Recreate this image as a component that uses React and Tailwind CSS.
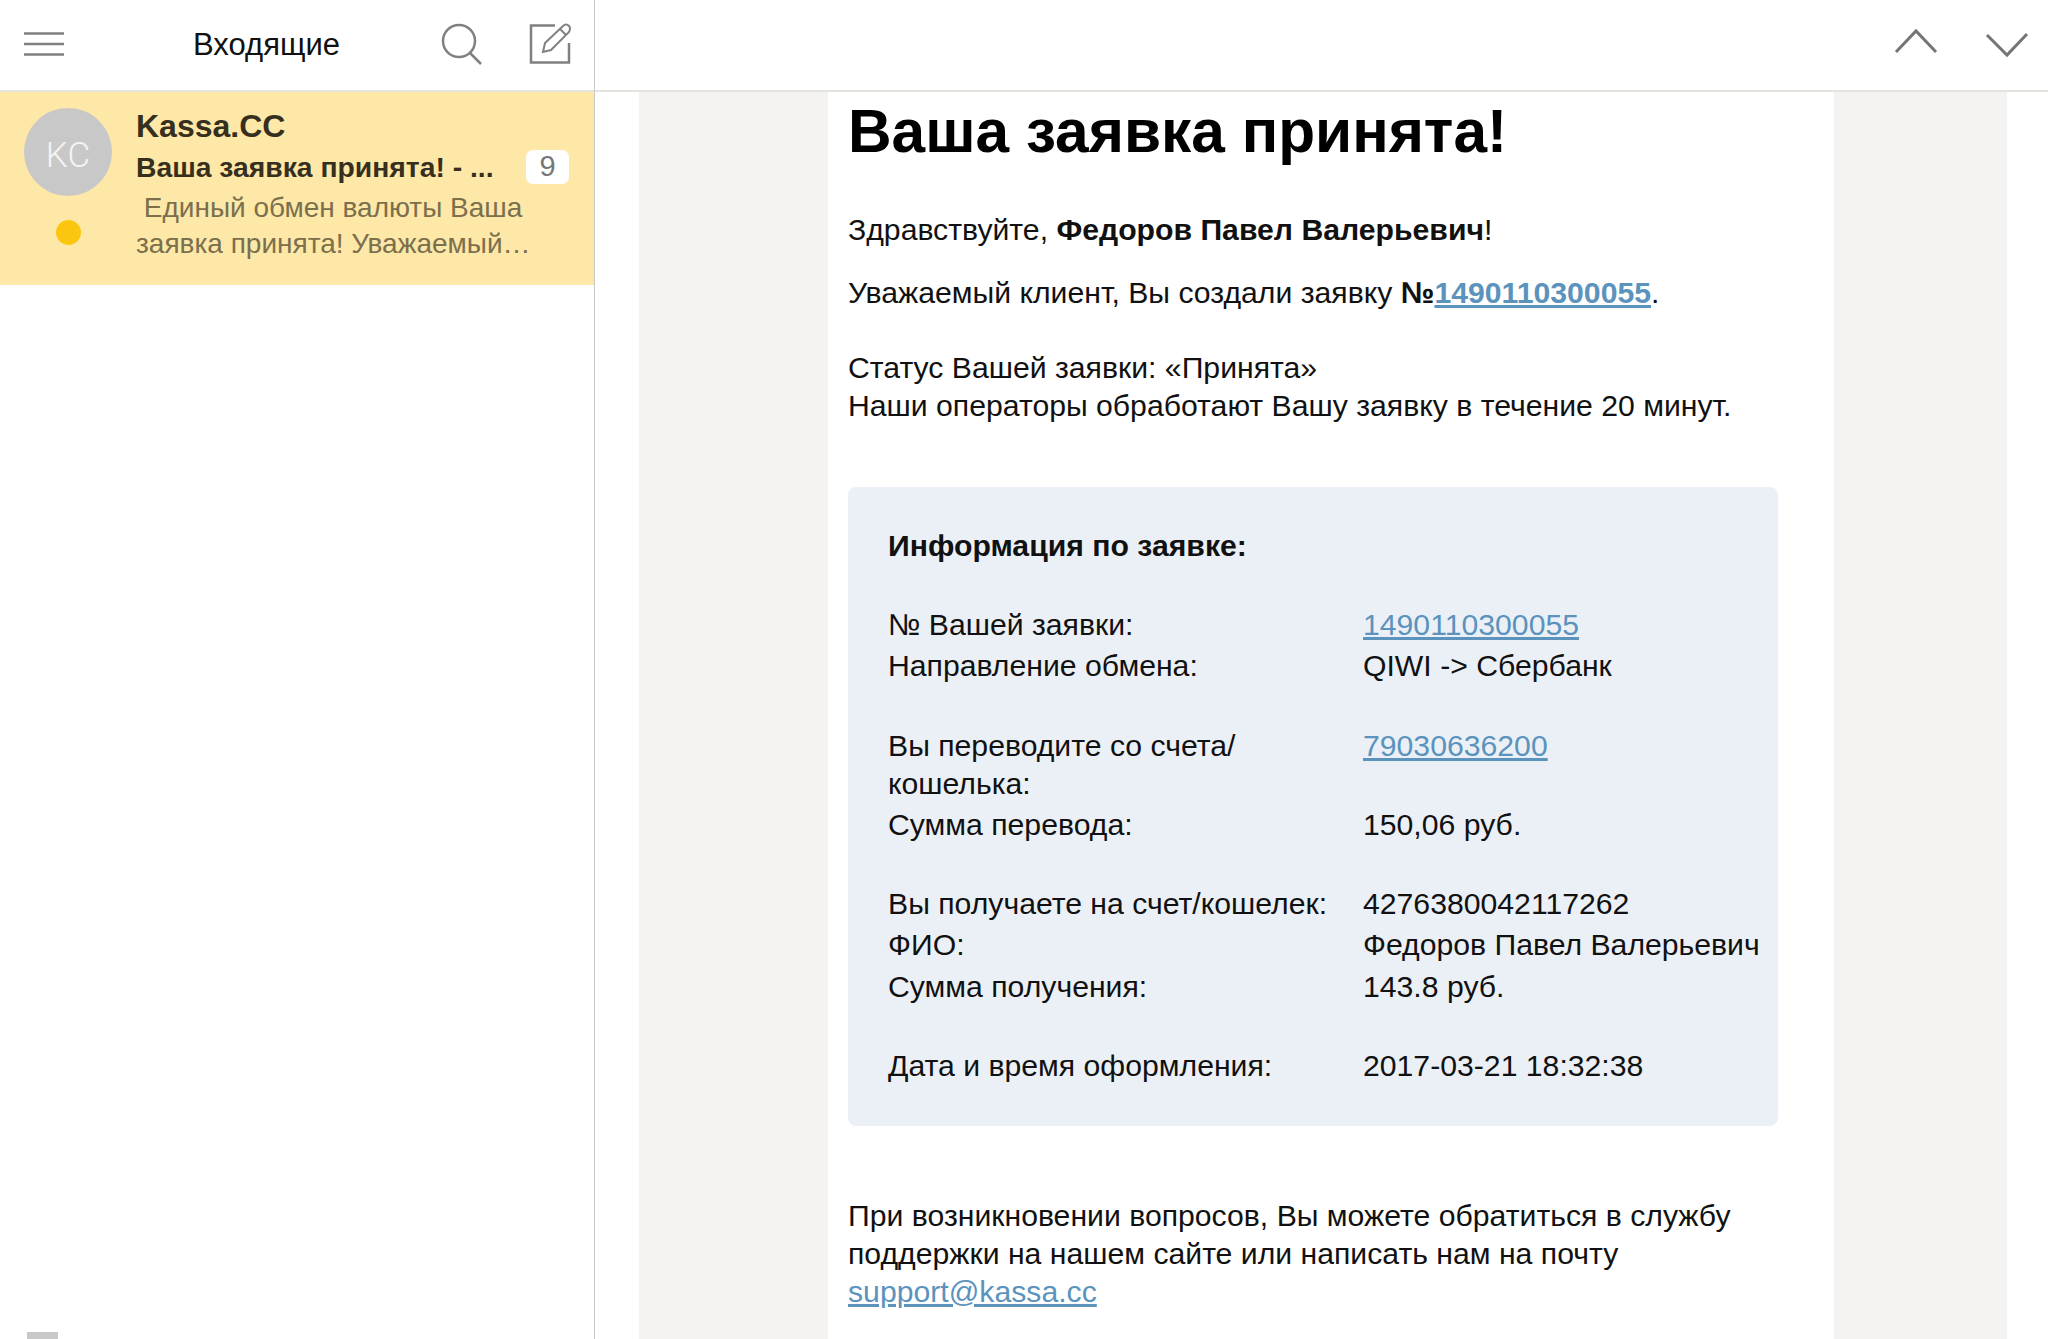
const rows = [
  [["№ Вашей заявки:", "1490110300055", true], ["Направление обмена:", "QIWI -> Сбербанк"]],
  [["Вы переводите со счета/\nкошелька:", "79030636200", true], ["Сумма перевода:", "150,06 руб."]],
  [["Вы получаете на счет/кошелек:", "4276380042117262"], ["ФИО:", "Федоров Павел Валерьевич"], ["Сумма получения:", "143.8 руб."]],
  [["Дата и время оформления:", "2017-03-21 18:32:38"]],
];

const link = "text-[#5b93bd] underline";

export default function App() {
  return (
    <div className="flex h-[1339px] w-[2048px] overflow-hidden bg-white font-['Liberation_Sans',Arial,sans-serif] text-[#111]">
      <aside className="flex w-[595px] shrink-0 flex-col border-r border-[#c9c9c9]">
        <header className="flex h-[92px] shrink-0 items-center border-b-2 border-[#e6e4df] pl-[24px]">
          <svg width="40" height="24" viewBox="0 0 40 24" className="mb-[2px] shrink-0" fill="none" stroke="#808080" strokeWidth="2.500">
            <path d="M0 1.500h40M0 12h40M0 22.500h40" />
          </svg>
          <span className="ml-[129px] mb-[2px] w-[148px] shrink-0 whitespace-nowrap text-[31px] leading-none text-[#111]">Входящие</span>
          <svg width="42" height="42" viewBox="0 0 42 42" className="ml-[100px] mb-[2px] shrink-0" fill="none" stroke="#808080" strokeWidth="2.500">
            <circle cx="18" cy="18" r="16" />
            <path d="M29 30l11 11" />
          </svg>
          <svg width="42" height="42" viewBox="0 0 42 42" className="ml-[46px] mb-[2px] shrink-0" fill="none" stroke="#808080" strokeWidth="2.500">
            <path d="M26 2.500H2v37h38V20" />
            <path d="M14 29l2-9L34 3c2-2 4-2 6 0s1 4 0 6L22 27z" strokeWidth="2" />
            <path d="M31 6l6 6" strokeWidth="2" />
          </svg>
        </header>
        <div className="flex h-[193px] shrink-0 bg-[#fde8a8] pl-[24px]">
          <div className="flex w-[88px] shrink-0 flex-col items-center pt-[16px]">
            <div className="flex size-[88px] items-center justify-center rounded-full bg-[#c8c8c8] pt-[9px] font-['Roboto',sans-serif] text-[35px] font-light text-[#f4f4f4]">KC</div>
            <div className="mt-[24px] size-[25px] rounded-full bg-[#fcc60f]"></div>
          </div>
          <div className="ml-[24px] w-[433px] shrink-0 pt-[15px]">
            <div className="text-[32px] font-bold leading-[38px] text-[#362f1d]">Kassa.CC</div>
            <div className="mt-[3px] flex h-[38px] items-center justify-between">
              <span className="text-[28.300px] font-bold leading-[38px] text-[#362f1d]">Ваша заявка принята! - ...</span>
              <span className="flex h-[34px] w-[43px] items-center justify-center rounded-[7px] bg-white text-[29px] text-[#777]">9</span>
            </div>
            <div className="mt-[4px] whitespace-pre text-[28px] leading-[36px] text-[#7b6f4c]">{" Единый обмен валюты Ваша\nзаявка принята! Уважаемый…"}</div>
          </div>
        </div>
        <div className="mt-auto ml-[27px] h-[7px] w-[31px] bg-[#c8c8c8]"></div>
      </aside>

      <main className="flex min-w-0 flex-1 flex-col">
        <header className="flex h-[92px] shrink-0 items-center justify-end border-b-2 border-[#e6e4df] pr-[19px]">
          <svg width="44" height="26" viewBox="0 0 44 26" className="mb-[8px]" fill="none" stroke="#757575" strokeWidth="3">
            <path d="M2 24L22 3l20 21" />
          </svg>
          <svg width="44" height="26" viewBox="0 0 44 26" className="ml-[47px]" fill="none" stroke="#757575" strokeWidth="3">
            <path d="M2 3l20 20L42 2" />
          </svg>
        </header>
        <div className="ml-[44px] mr-[41px] flex-1 bg-[#f4f3f1] pl-[189px] pr-[173px]">
          <div className="h-full bg-white pl-[20px] pr-[56px] pt-[4px] text-[30.200px] leading-[38px]">
            <h1 className="text-[60.400px] font-bold leading-[70px] text-black">Ваша заявка принята!</h1>
            <p className="mt-[45px]">Здравствуйте, <b>Федоров Павел Валерьевич</b>!</p>
            <p className="mt-[25px]">Уважаемый клиент, Вы создали заявку <b>№<span className={link}>1490110300055</span></b>.</p>
            <p className="mt-[37px]">Статус Вашей заявки: «Принята»<br />Наши операторы обработают Вашу заявку в течение 20 минут.</p>
            <section className="mt-[62px] h-[639px] w-[930px] rounded-[8px] bg-[#ebf0f6] pl-[40px] pt-[40px]">
              <h2 className="mb-[41px] font-bold">Информация по заявке:</h2>
              {rows.map((group, i) => (
                <div key={i} className="mb-[38px]">
                  {group.map(([label, value, isLink]) => (
                    <div key={label} className="grid grid-cols-[475px_1fr] pb-[3.250px]">
                      <div className="whitespace-pre-line">{label}</div>
                      <div className={isLink ? link : ""}>{value}</div>
                    </div>
                  ))}
                </div>
              ))}
            </section>
            <p className="mt-[71px] w-[900px]">При возникновении вопросов, Вы можете обратиться в службу поддержки на нашем сайте или написать нам на почту <span className={link}>support@kassa.cc</span></p>
          </div>
        </div>
      </main>
    </div>
  );
}
